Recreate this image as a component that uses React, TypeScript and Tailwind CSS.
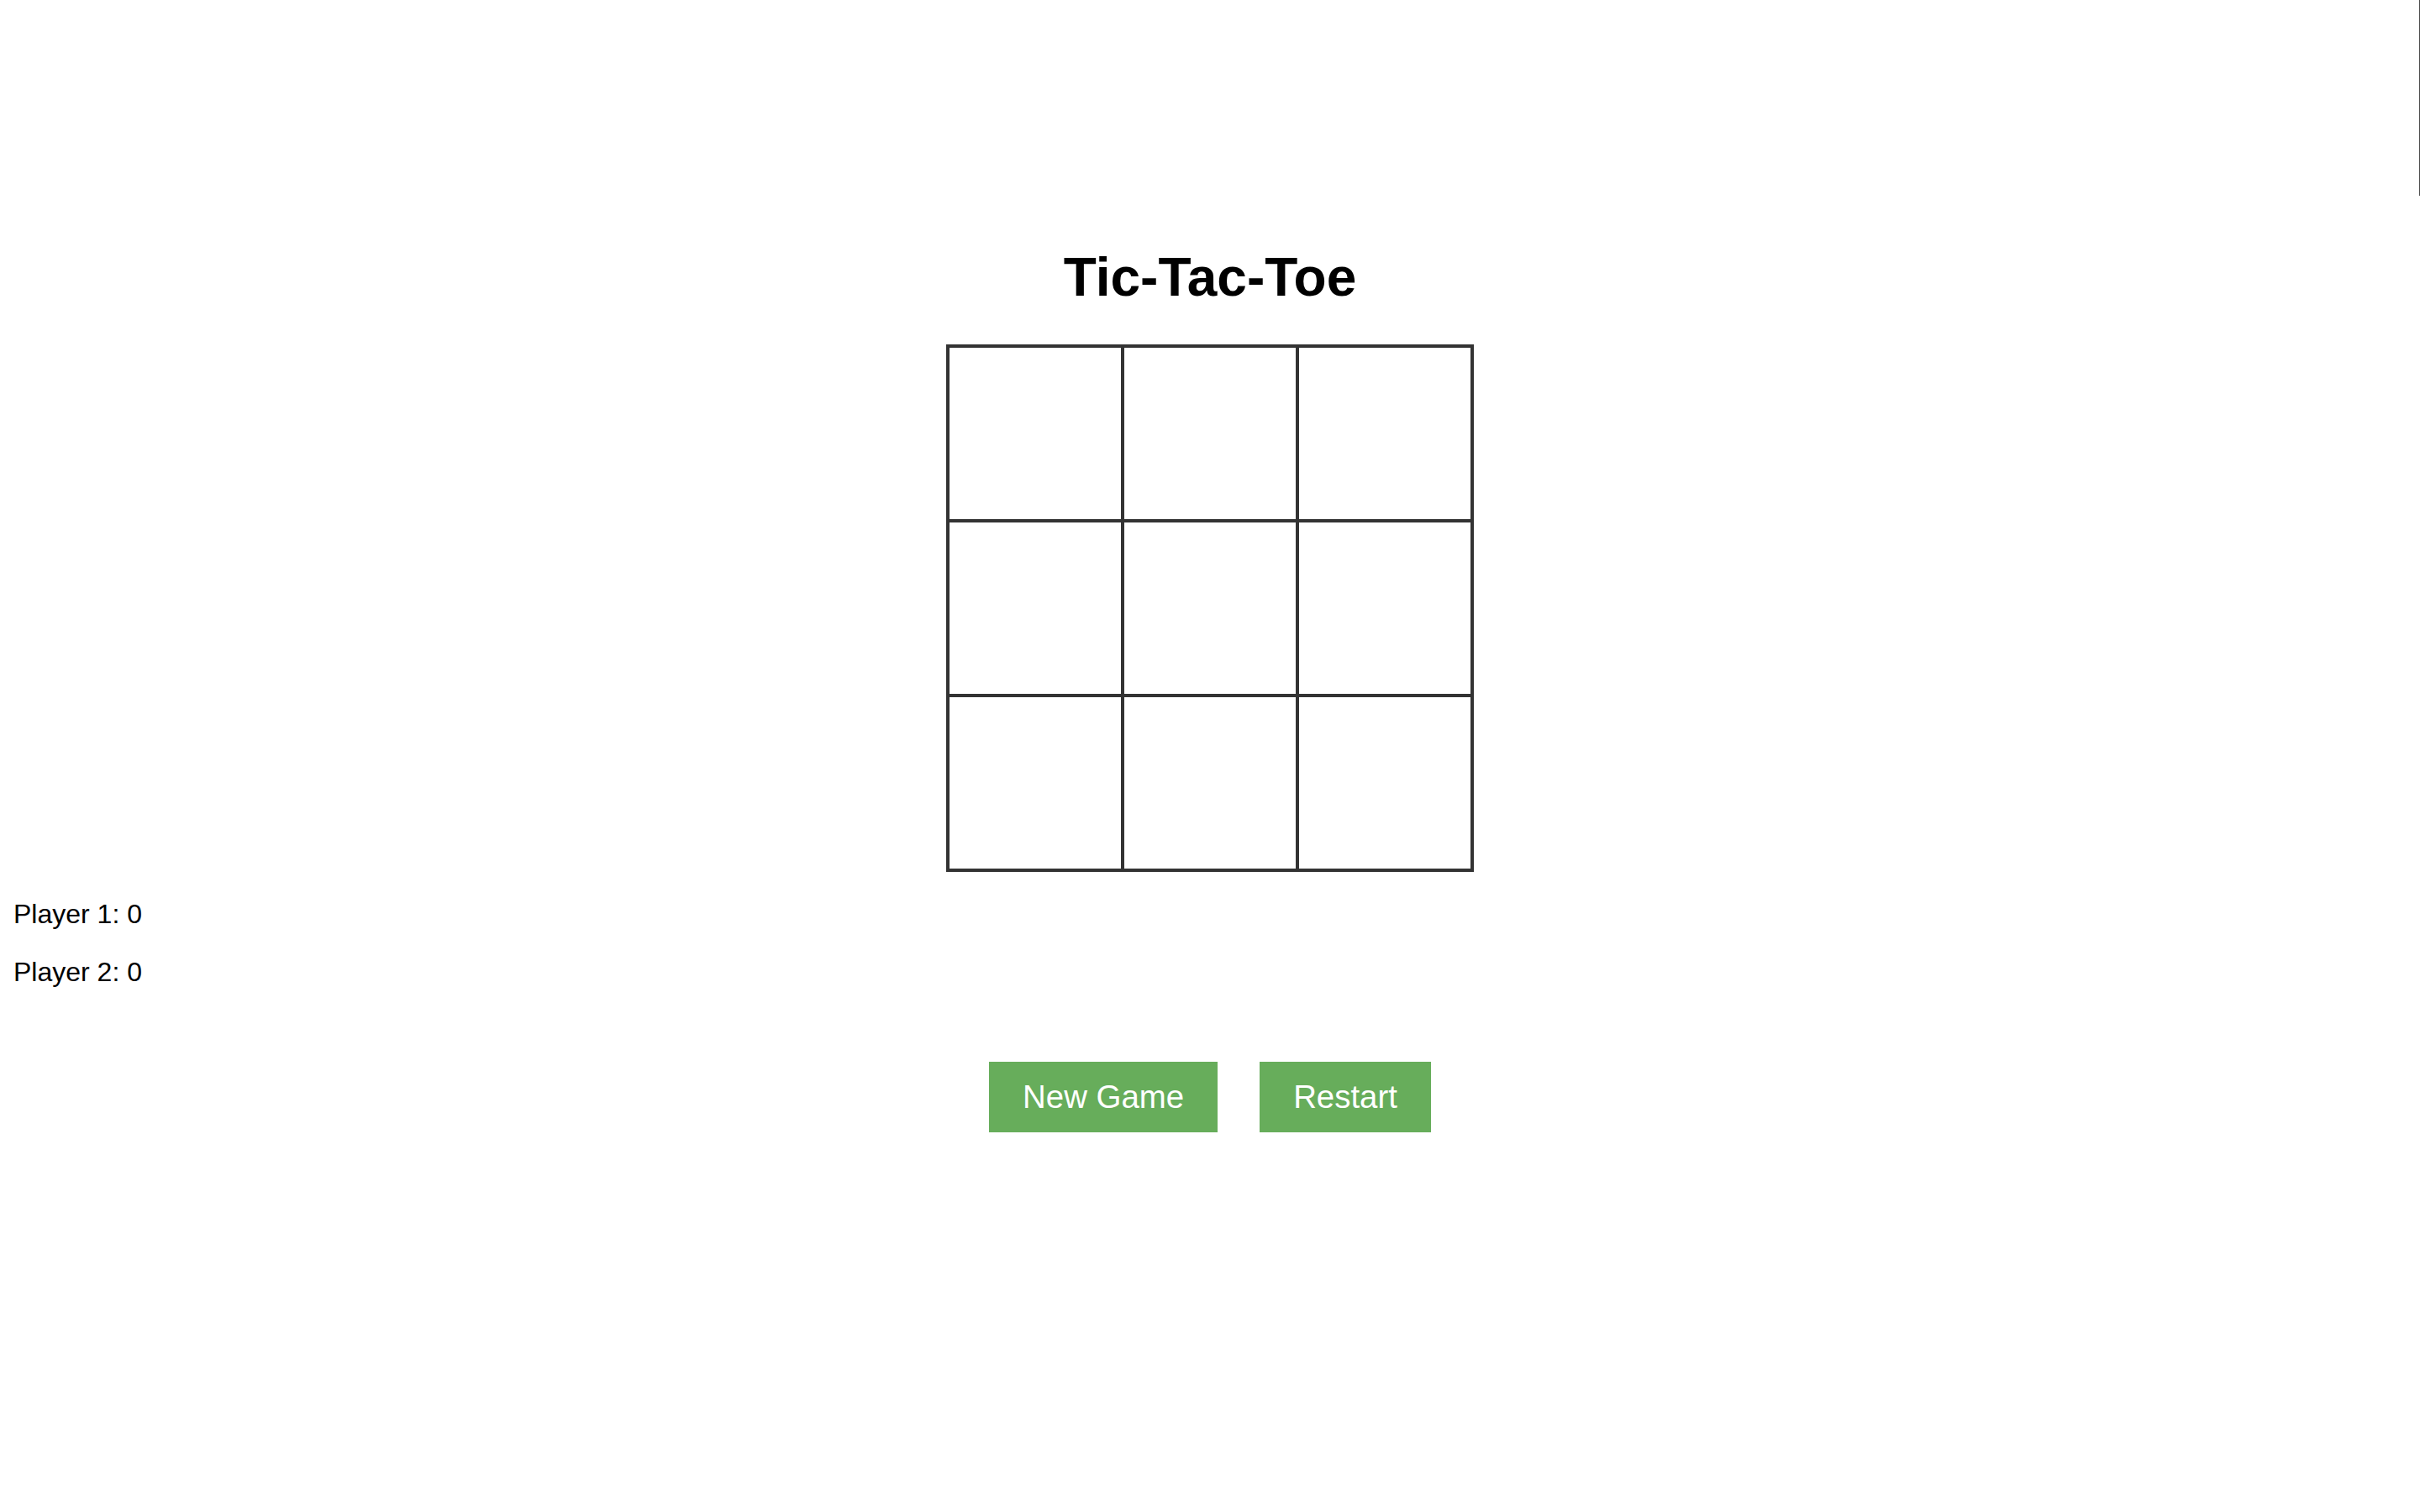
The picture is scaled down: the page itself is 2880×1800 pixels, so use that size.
import React from "react";

export default function App() {
  const cells = Array.from({ length: 9 });
  return (
    <div className="relative min-h-screen bg-white text-black font-['Liberation_Sans',Arial,sans-serif]">
      <div className="absolute right-0 top-0 h-[233px] w-[1px] bg-[#4a4a4a]" />
      <div className="px-[16px] pt-[294px]">
        <h1 className="text-center text-[64px] font-bold leading-[73.5px] mb-[42.5px]">Tic-Tac-Toe</h1>
        <div className="mx-auto grid w-[628px] grid-cols-3 border-2 border-[#333333]">
          {cells.map((_, i) => (
            <div key={i} className="h-[208px] w-[208px] border-2 border-[#333333] bg-white" />
          ))}
        </div>
        <p className="mt-[32px] text-[32px] leading-[36.8px]">Player 1: 0</p>
        <p className="mt-[32px] text-[32px] leading-[36.8px]">Player 2: 0</p>
        <div className="mt-[88.4px] flex justify-center gap-[50px]">
          <button className="bg-[#67ad5b] px-[40px] py-[20px] text-[38.4px] leading-[44.1px] text-white">New Game</button>
          <button className="bg-[#67ad5b] px-[40px] py-[20px] text-[38.4px] leading-[44.1px] text-white">Restart</button>
        </div>
      </div>
    </div>
  );
}
